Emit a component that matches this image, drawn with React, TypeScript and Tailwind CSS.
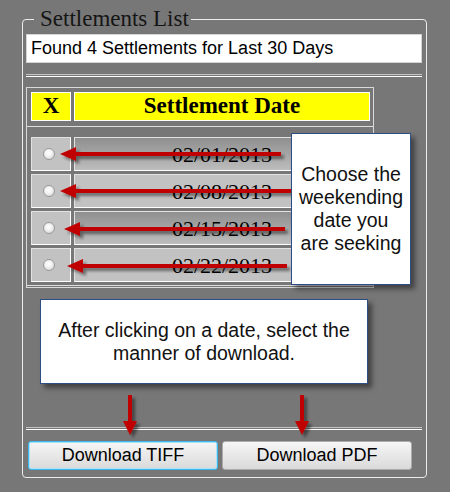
const dates = ['02/01/2013', '02/08/2013', '02/15/2013', '02/22/2013']

const hArrows = [
    { x: 60, y: 154, end: 281 },
    { x: 60, y: 191, end: 293 },
    { x: 64, y: 229, end: 285 },
    { x: 67, y: 266, end: 287 },
]

function Radio() {
    return (
        <span className="block w-[12px] h-[12px] rounded-full border border-[#9a9a9a] bg-[radial-gradient(circle_at_45%_40%,#ffffff_0%,#f2f2f2_40%,#c9c9c9_100%)]" />
    )
}

function Arrows() {
    return (
        <svg className="absolute left-0 top-0 pointer-events-none" width="450" height="492" viewBox="0 0 450 492">
            <defs>
                <filter id="sh" x="-10%" y="-60%" width="130%" height="260%">
                    <feDropShadow dx="3" dy="3" stdDeviation="1.8" floodColor="#000" floodOpacity="0.45" />
                </filter>
            </defs>
            <g fill="#c00000" filter="url(#sh)">
                {hArrows.map(a => (
                    <path
                        key={a.y}
                        d={`M${a.x} ${a.y} L${a.x + 16} ${a.y - 7} L${a.x + 16} ${a.y - 2} L${a.end} ${a.y - 2} L${a.end} ${a.y + 2} L${a.x + 16} ${a.y + 2} L${a.x + 16} ${a.y + 7} Z`}
                    />
                ))}
                {[130, 302].map(x => (
                    <path
                        key={x}
                        d={`M${x - 2} 395 L${x + 2} 395 L${x + 2} 421 L${x + 7} 421 L${x} 435 L${x - 7} 421 L${x - 2} 421 Z`}
                    />
                ))}
            </g>
        </svg>
    )
}

export default function App() {
    return (
        <div className="relative w-[450px] h-[492px] overflow-hidden bg-[#777777] pt-[6px] font-['Liberation_Sans',Arial,sans-serif] text-black">
            <fieldset className="ml-[22px] w-[405px] border border-[#ececec] rounded-[4px] pl-[3px] pr-[4px] pb-[7px]">
                <legend className="ml-[8px] pl-[6px] pr-[2px] font-['Liberation_Serif',serif] text-[23px] leading-[26px] text-[#151515]">
                    Settlements List
                </legend>
                <div className="mt-[2px] h-[29px] bg-white border border-[#d4d4d4] pl-[4px] text-[18px] leading-[27px]">
                    Found 4 Settlements for Last 30 Days
                </div>
                <div className="mt-[11px] h-[3px] border-t border-t-[#c4c4c4] border-b border-b-white" />

                {/* Table */}
                <div className="mt-[10px] w-[348px] border border-[#dadada] pb-[1px] font-['Liberation_Serif',serif]">
                    <div className="flex gap-[3px] pt-[4px] pl-[4px]">
                        <div className="w-[40px] h-[29px] bg-[#ffff00] border border-white flex items-center justify-center text-[23px] font-bold">X</div>
                        <div className="w-[296px] h-[29px] bg-[#ffff00] border border-white flex items-center justify-center text-[23px] font-bold">Settlement Date</div>
                    </div>
                    <div className="mt-[5px] border-t border-b border-[#dedede] pt-[10px] pb-[3px] pl-[4px] flex flex-col gap-[3px]">
                        {dates.map((d, i) => (
                            <div key={d} className="flex gap-[3px] h-[34px]">
                                <div className="w-[40px] bg-[#c2c2c2] border border-white border-t-[#e2e2e2] border-l-[#e2e2e2] flex items-center pl-[11px]">
                                    <Radio />
                                </div>
                                <div className={`w-[296px] border border-white border-t-[#e2e2e2] border-l-[#e2e2e2] flex items-center justify-center text-[22px] ${i % 2 === 0 ? 'bg-linear-to-b from-[#8f8f8f] to-[#bdbdbd]' : 'bg-[#c2c2c2]'}`}>
                                    {d}
                                </div>
                            </div>
                        ))}
                    </div>
                </div>

                <div className="mt-[139px] h-[3px] border-t border-t-[#c4c4c4] border-b border-b-white" />
                <div className="mt-[11px] flex gap-[4px] pl-[2px]">
                    <button className="w-[190px] h-[29px] rounded-[3px] border border-[#3cb8ec] shadow-[inset_0_0_0_1px_#a9e2f8] bg-linear-to-b from-[#f6f6f6] to-[#dadada] text-[18px]">
                        Download TIFF
                    </button>
                    <button className="w-[190px] h-[29px] rounded-[3px] border border-[#acacac] bg-linear-to-b from-[#f6f6f6] to-[#dadada] text-[18px]">
                        Download PDF
                    </button>
                </div>
            </fieldset>

            <Arrows />

            <div className="absolute left-[291px] top-[133px] w-[120px] h-[152px] bg-white border border-[#2d4e85] shadow-[4px_4px_5px_rgba(0,0,0,0.45)] flex items-center justify-center text-center text-[19.5px] leading-[23px] text-[#111]">
                <p>Choose the<br />weekending<br />date you<br />are seeking</p>
            </div>

            <div className="absolute left-[40px] top-[299px] w-[328px] h-[85px] bg-white border border-[#2d4e85] shadow-[4px_4px_5px_rgba(0,0,0,0.45)] flex items-center justify-center text-center text-[19.5px] leading-[23px] text-[#111]">
                <p>After clicking on a date, select the<br />manner of download.</p>
            </div>
        </div>
    )
}
